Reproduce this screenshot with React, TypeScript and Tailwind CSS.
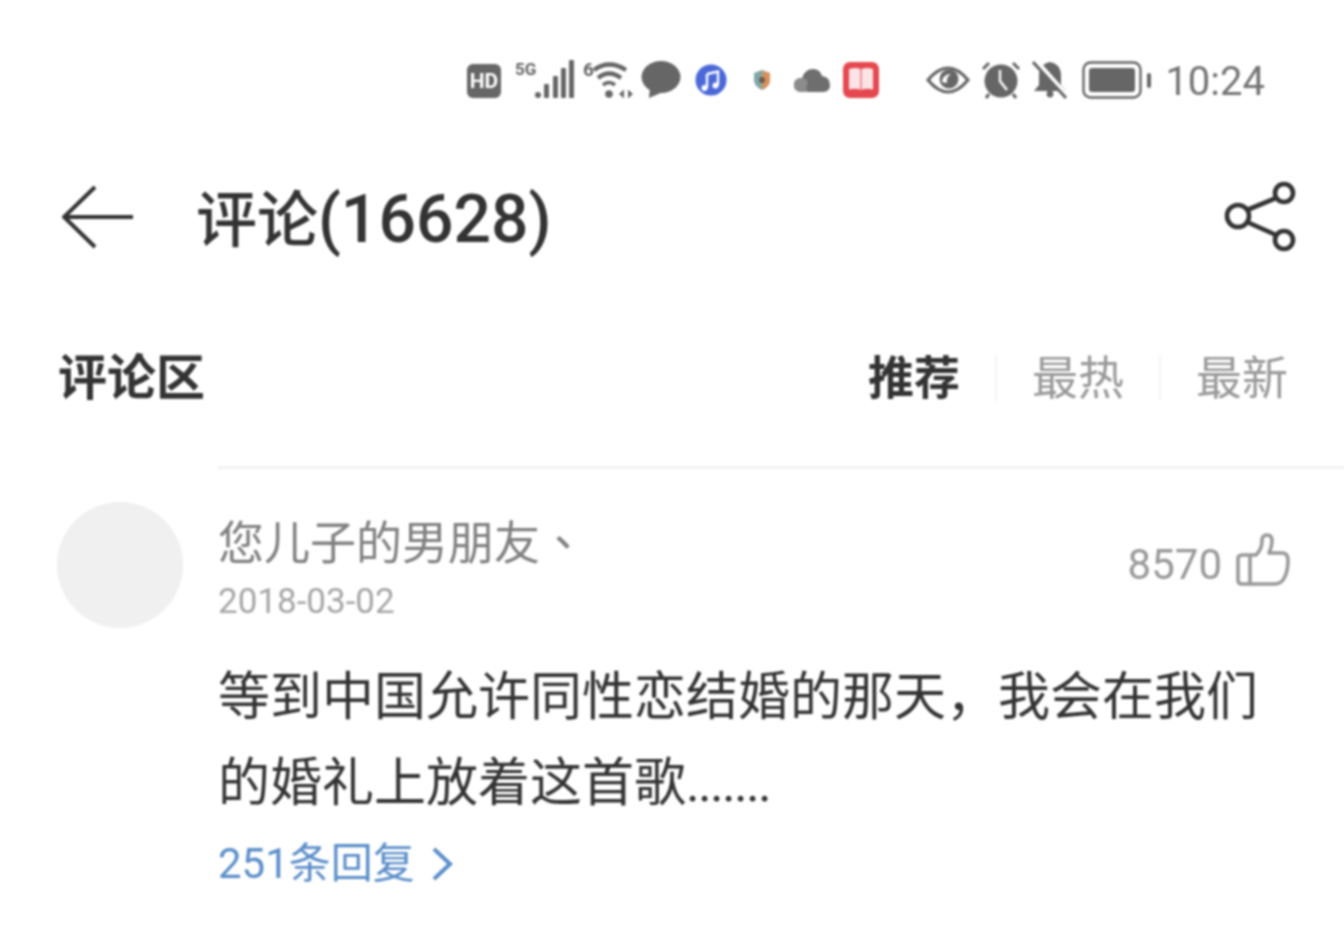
const font = { fontFamily: 'Roboto, "Noto Sans CJK SC", sans-serif' }

function StatusIcons() {
  return (
    <div className="flex h-[80px] items-center justify-end pr-[79px] pt-[4px] text-[#666666]">
      {/* HD */}
      <svg width="36" height="36" viewBox="0 0 36 36" className="mr-[13px] mt-[2px]">
        <rect x="1" y="1" width="34" height="34" rx="6" fill="#666" />
        <text x="18" y="25" textAnchor="middle" fontSize="21" fontWeight="700" fill="#fff" fontFamily="Roboto">HD</text>
      </svg>
      {/* 5G signal */}
      <svg width="60" height="42" viewBox="0 0 60 42" className="mr-[8px] overflow-visible">
        <text x="0" y="16" fontSize="17" fontWeight="700" fill="#666" fontFamily="Roboto">5G</text>
        <circle cx="23" cy="36" r="3" fill="#666" />
        <rect x="29" y="25" width="5" height="14" rx="1" fill="#666" />
        <rect x="38" y="17" width="5" height="22" rx="1" fill="#666" />
        <rect x="46" y="9" width="5" height="30" rx="1" fill="#666" />
        <rect x="54" y="1" width="5" height="38" rx="1" fill="#666" />
      </svg>
      {/* wifi 6 */}
      <svg width="50" height="42" viewBox="0 0 50 42" className="mr-[8px]">
        <text x="0" y="17" fontSize="19" fontWeight="700" fill="#666" fontFamily="Roboto">6</text>
        <path d="M11 11 Q26 0 43 11" fill="none" stroke="#666" strokeWidth="4.2" />
        <path d="M15 19 Q26 10 38 19" fill="none" stroke="#666" strokeWidth="4.2" />
        <path d="M20 26 Q26 21 32 26" fill="none" stroke="#666" strokeWidth="3.6" />
        <circle cx="26" cy="35" r="3.8" fill="#666" />
        <path d="M36 35 l5 -4.5 v9z M43 30 v10 M45 30.5 l5 4.5 -5 4.5z" fill="#666" />
      </svg>
      {/* bubble */}
      <svg width="40" height="38" viewBox="0 0 40 38" className="mr-[14px]">
        <ellipse cx="20" cy="16" rx="19.5" ry="16" fill="#666" />
        <path d="M9 26 L8 37 L22 31z" fill="#666" />
      </svg>
      {/* music */}
      <svg width="32" height="32" viewBox="0 0 32 32" className="mr-[25px]">
        <circle cx="16" cy="16" r="15.5" fill="#4a68d8" />
        <path d="M12 10 L23 7.5 V21" fill="none" stroke="#fff" strokeWidth="2.4" />
        <path d="M12 10 V24" fill="none" stroke="#fff" strokeWidth="2.4" />
        <circle cx="9.5" cy="24" r="3" fill="#fff" />
        <circle cx="20.5" cy="21.5" r="3" fill="#fff" />
      </svg>
      {/* shield */}
      <svg width="20" height="22" viewBox="0 0 20 22" className="mr-[22px]">
        <path d="M2 4 L10 1 L18 4 V12 Q17 18 10 21 Q3 18 2 12z" fill="#7fa7a8" />
        <path d="M10 2 L18 4 V12 Q17 18 10 21z" fill="#d9905a" />
        <circle cx="10" cy="11" r="3" fill="#6a5a4a" />
      </svg>
      {/* cloud */}
      <svg width="36" height="26" viewBox="0 0 36 26" className="mr-[13px]">
        <path d="M8 25 Q0 25 0 18 Q0 11 8 11 Q11 2 19 2 Q26 2 28 9 Q36 10 36 18 Q36 25 29 25z" fill="#6e6e6e" />
        <path d="M8 25 Q0 25 0 18 Q0 11 8 11 Q12 11 14 15 Q11 20 14 25z" fill="#8c8c8c" />
      </svg>
      {/* book */}
      <svg width="36" height="36" viewBox="0 0 36 36" className="mr-[47px]">
        <rect width="36" height="36" rx="7" fill="#e5484f" />
        <path d="M6 7 Q13 5 17.5 7 V28 Q13 26 6 27.5z M30 7 Q23 5 18.5 7 V28 Q23 26 30 27.5z" fill="#fbe4e6" />
      </svg>
      {/* eye */}
      <svg width="44" height="32" viewBox="0 0 44 32" className="mr-[11px]">
        <path d="M2 16 Q22 -8 42 16 Q22 40 2 16z" fill="none" stroke="#666" strokeWidth="3.2" />
        <circle cx="23" cy="15" r="9.5" fill="#666" />
        <path d="M16 18 Q17 10 25 10 Q20 13 21 19" fill="#fff" />
      </svg>
      {/* alarm */}
      <svg width="40" height="38" viewBox="0 0 40 38" className="mr-[11px]">
        <circle cx="20" cy="20" r="16.5" fill="#666" />
        <path d="M2 8 L8 2 M38 8 L32 2 M8 33 L5 37 M32 33 L35 37" stroke="#666" strokeWidth="3" />
        <path d="M19 9 V20 L26 29" fill="none" stroke="#fff" strokeWidth="2.4" />
      </svg>
      {/* muted bell */}
      <svg width="36" height="38" viewBox="0 0 36 38" className="mr-[14px]">
        <path d="M18 1 Q29 3 29 15 V24 L34 30 H2 L7 24 V15 Q7 3 18 1z" fill="#666" />
        <circle cx="18" cy="33" r="3.4" fill="#666" />
        <path d="M4 0 L36 36" stroke="#fff" strokeWidth="5" />
        <path d="M1 1 L34 37" stroke="#666" strokeWidth="3" />
      </svg>
      {/* battery */}
      <svg width="70" height="38" viewBox="0 0 70 38" className="mr-[13px]">
        <rect x="1.5" y="1.5" width="57" height="35" rx="7" fill="none" stroke="#666" strokeWidth="2.4" />
        <rect x="7" y="7" width="46" height="24" rx="3" fill="#666" />
        <rect x="65" y="12" width="4" height="15" rx="2" fill="#666" />
      </svg>
      <span className="mt-[4px] text-[40px] leading-none text-[#737373]" style={font}>10:24</span>
    </div>
  )
}

export default function App() {
  return (
    <div className="h-[926px] w-[1344px] overflow-hidden bg-white blur-[0.8px]" style={font}>
      <div className="h-[38px]" />
      <StatusIcons />

      <div className="flex h-[150px] items-center justify-between pl-[62px] pr-[48px] pt-[52px]">
        <div className="flex items-center">
          <svg width="72" height="64" viewBox="0 0 72 64" fill="none" stroke="#333" strokeWidth="4" className="mb-[4px] mr-[62px]">
            <path d="M2 32 H71 M33 2 L2 32 L33 62" />
          </svg>
          <span className="pt-[2px] text-[61px] font-medium leading-none text-[#333333]">
            评论<span className="text-[66px]">(16628)</span>
          </span>
        </div>
        <svg width="72" height="72" viewBox="0 0 72 72" fill="none" stroke="#333" strokeWidth="4.6" className="mb-[4px]">
          <circle cx="60" cy="12" r="9" />
          <circle cx="14" cy="35" r="11" />
          <circle cx="60" cy="59" r="9" />
          <path d="M23 29 L52 17 M23 41 L52 54" />
        </svg>
      </div>

      <div className="flex h-[150px] items-center justify-between pl-[58px] pr-[56px] pt-[70px]">
        <span className="text-[49px] font-bold leading-none text-[#333333]">评论区</span>
        <div className="flex items-center text-[46px] leading-none">
          <span className="font-bold text-[#333333]">推荐</span>
          <div className="mx-[35px] h-[46px] w-[2px] bg-[#f4f4f4]" />
          <span className="text-[#999999]">最热</span>
          <div className="mx-[35px] h-[46px] w-[2px] bg-[#f4f4f4]" />
          <span className="text-[#999999]">最新</span>
        </div>
      </div>

      <div className="ml-[218px] mt-[48px] h-[3px] bg-[#f2f2f2]" />

      <div className="flex pl-[57px] pr-[54px] pt-[33px]">
        <div className="h-[126px] w-[126px] shrink-0 rounded-full bg-[#f0f0f0]" />
        <div className="ml-[35px] min-w-0 flex-1 pt-[14px]">
          <div className="flex items-center justify-between">
            <div>
              <div className="h-[54px] text-[46px] leading-[54px] text-[#808080]">
                您儿子的男朋友<span className="font-['Noto_Sans_CJK_TC'] leading-none">、</span>
              </div>
              <div className="mt-[14px] text-[35px] leading-[36px] text-[#a6a6a6]">2018-03-02</div>
            </div>
            <div className="flex items-center gap-[14px] pb-[6px]">
              <span className="text-[42px] leading-none text-[#999999]">8570</span>
              <svg width="54" height="54" viewBox="0 0 54 54" fill="none" stroke="#999" strokeWidth="3.6" strokeLinejoin="round" className="-mt-[10px]">
                <path d="M14 22 H6 Q2 22 2 26 V47 Q2 51 6 51 H14 Z" />
                <path d="M14 22 H20 Q26 16 26 8 Q26 2 31 2 Q36 2 36 8 Q36 14 33 20 H46 Q52 20 52 27 Q52 40 47 47 Q44 51 38 51 H14" />
              </svg>
            </div>
          </div>
          <div className="mt-[35px] text-[52px] leading-[86px] text-[#333333]">
            <div>等到中国允许同性恋结婚的那天，我会在我们</div>
            <div>
              的婚礼上放着这首歌<span className="tracking-[-1.7px]">.......</span>
            </div>
          </div>
          <div className="mt-[10px] flex items-center text-[42px] leading-[54px] text-[#5b8ec9]">
            251条回复
            <svg width="22" height="36" viewBox="0 0 22 36" fill="none" stroke="#5b8ec9" strokeWidth="4" className="ml-[16px]">
              <path d="M3 3 L19 18 L3 33" />
            </svg>
          </div>
        </div>
      </div>
    </div>
  )
}
